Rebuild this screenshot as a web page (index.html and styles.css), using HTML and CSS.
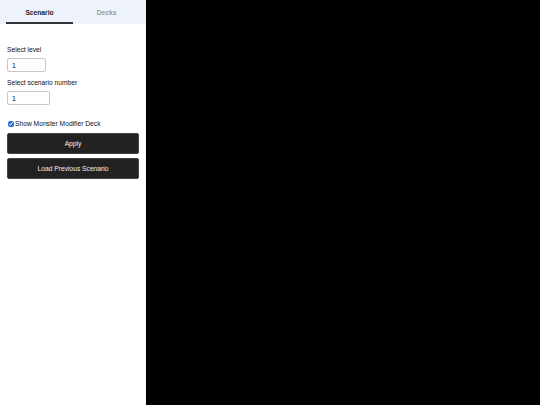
FILE: index.html
```html
<!DOCTYPE html>
<html>
<head>
<meta charset="utf-8">
<link rel="stylesheet" href="styles.css">
</head>
<body>
<div class="app">
  <aside class="sidebar">
    <nav class="tabs">
      <div class="tab active">Scenario</div>
      <div class="tab">Decks</div>
    </nav>
    <div class="panel">
      <label class="label">Select level</label>
      <input class="field field-level" type="text" value="1">
      <label class="label">Select scenario number</label>
      <input class="field field-number" type="text" value="1">
      <label class="check"><input type="checkbox" checked><span>Show Monster Modifier Deck</span></label>
      <button class="btn">Apply</button>
      <button class="btn">Load Previous Scenario</button>
    </div>
  </aside>
  <main class="stage"></main>
</div>
</body>
</html>
```
FILE: styles.css
```css
* { box-sizing: border-box; }
html, body { margin: 0; padding: 0; height: 100%; }
body { font-family: "Liberation Sans", Arial, sans-serif; font-size: 6.7px; color: #111; background: #000; }
.app { display: flex; height: 405px; }
.sidebar { width: 146px; background: #fff; display: flex; flex-direction: column; }
.stage { flex: 1; background: #000; }
.tabs { display: flex; height: 24px; background: #eef3fb; padding: 0 6px; }
.tab { flex: 1; display: flex; align-items: center; justify-content: center; color: #9a9a9a; font-weight: bold; border-bottom: 2px solid transparent; padding-top: 2px; }
.tab.active { color: #222; border-bottom-color: #333; }
.panel { padding: 20px 7px 0; display: flex; flex-direction: column; align-items: flex-start; }
.label { line-height: 11px; margin-bottom: 3px; }
.field { font-family: inherit; font-size: 7px; height: 14px; border: 1px solid #c8c8c8; border-radius: 2px; padding: 0 4px; margin: 0; color: #111; background: #fff; }
.field-level { width: 39px; margin-bottom: 5px; }
.field-number { width: 43px; margin-bottom: 14px; }
.check { display: flex; align-items: center; line-height: 10px; margin-bottom: 4px; }
.check input { width: 6px; height: 6px; margin: 0 1px 0 1px; accent-color: #2a6fd6; }
.btn { width: 132px; height: 21px; background: #222; color: #f2f2f2; border: 1px solid #444; border-radius: 2px; font-family: inherit; font-size: 6.7px; font-weight: normal; margin-bottom: 4px; padding: 0; }
```
